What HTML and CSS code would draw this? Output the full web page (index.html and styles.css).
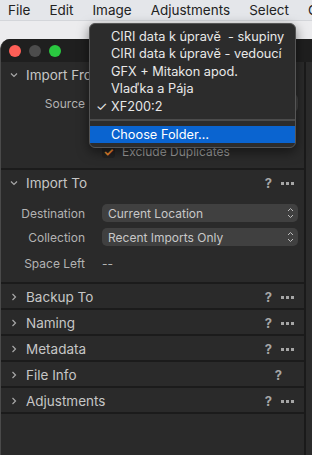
FILE: index.html
```html
<!DOCTYPE html>
<html lang="cs">
<head>
    <meta charset="UTF-8">
    <meta name="viewport" content="width=device-width, initial-scale=1.0">
    <title>Import</title>
    <link rel="stylesheet" href="styles.css">
</head>
<body>
    <!-- systémová lišta -->
    <div class="menubar">
        <span>File</span>
        <span>Edit</span>
        <span>Image</span>
        <span>Adjustments</span>
        <span>Select</span>
        <span>C</span>
    </div>

    <div class="window">
        <div class="titlebar">
            <span class="light red"></span>
            <span class="light grey"></span>
            <span class="light green"></span>
        </div>

        <div class="window-body">
            <div class="inspector">
                <!-- Import From -->
                <div class="section">
                    <div class="section-head">
                        <svg class="chevron" width="8" height="8" viewBox="0 0 8 8"><path d="M1 2.5 L4 5.5 L7 2.5" /></svg>
                        <span class="section-title">Import From</span>
                    </div>
                    <div class="section-body from-body">
                        <div class="row">
                            <span class="label">Source</span>
                            <div class="popup"></div>
                        </div>
                        <div class="row">
                            <span class="label"></span>
                            <div class="check"><span class="box"></span></div>
                        </div>
                        <div class="row">
                            <span class="label"></span>
                            <div class="check"><span class="box">✓</span>Exclude Duplicates</div>
                        </div>
                    </div>
                </div>

                <!-- Import To -->
                <div class="section">
                    <div class="section-head">
                        <svg class="chevron" width="8" height="8" viewBox="0 0 8 8"><path d="M1 2.5 L4 5.5 L7 2.5" /></svg>
                        <span class="section-title">Import To</span>
                        <span class="help">?</span>
                        <span class="more"><i></i><i></i><i></i></span>
                    </div>
                    <div class="section-body to-body">
                        <div class="row">
                            <span class="label">Destination</span>
                            <div class="popup">Current Location
                                <svg class="updown" width="7" height="12" viewBox="0 0 7 12"><path d="M1 4 L3.5 1.5 L6 4 M1 8 L3.5 10.5 L6 8" /></svg>
                            </div>
                        </div>
                        <div class="row">
                            <span class="label">Collection</span>
                            <div class="popup">Recent Imports Only
                                <svg class="updown" width="7" height="12" viewBox="0 0 7 12"><path d="M1 4 L3.5 1.5 L6 4 M1 8 L3.5 10.5 L6 8" /></svg>
                            </div>
                        </div>
                        <div class="row">
                            <span class="label">Space Left</span>
                            <span class="value">--</span>
                        </div>
                    </div>
                </div>

                <div class="section">
                    <div class="section-head">
                        <svg class="chevron" width="8" height="8" viewBox="0 0 8 8"><path d="M2.5 1 L5.5 4 L2.5 7" /></svg>
                        <span class="section-title">Backup To</span>
                        <span class="help">?</span>
                        <span class="more"><i></i><i></i><i></i></span>
                    </div>
                </div>

                <div class="section">
                    <div class="section-head">
                        <svg class="chevron" width="8" height="8" viewBox="0 0 8 8"><path d="M2.5 1 L5.5 4 L2.5 7" /></svg>
                        <span class="section-title">Naming</span>
                        <span class="help">?</span>
                        <span class="more"><i></i><i></i><i></i></span>
                    </div>
                </div>

                <div class="section">
                    <div class="section-head">
                        <svg class="chevron" width="8" height="8" viewBox="0 0 8 8"><path d="M2.5 1 L5.5 4 L2.5 7" /></svg>
                        <span class="section-title">Metadata</span>
                        <span class="help">?</span>
                        <span class="more"><i></i><i></i><i></i></span>
                    </div>
                </div>

                <div class="section">
                    <div class="section-head">
                        <svg class="chevron" width="8" height="8" viewBox="0 0 8 8"><path d="M2.5 1 L5.5 4 L2.5 7" /></svg>
                        <span class="section-title">File Info</span>
                        <span class="help solo">?</span>
                    </div>
                </div>

                <div class="section">
                    <div class="section-head">
                        <svg class="chevron" width="8" height="8" viewBox="0 0 8 8"><path d="M2.5 1 L5.5 4 L2.5 7" /></svg>
                        <span class="section-title">Adjustments</span>
                        <span class="help">?</span>
                        <span class="more"><i></i><i></i><i></i></span>
                    </div>
                </div>
            </div>
            <div class="divider"></div>
            <div class="viewer"></div>
        </div>
    </div>

    <!-- rozbalené menu zdroje -->
    <div class="source-menu">
        <div class="menu-item">CIRI data k úpravě&nbsp; - skupiny</div>
        <div class="menu-item">CIRI data k úpravě - vedoucí</div>
        <div class="menu-item">GFX + Mitakon apod.</div>
        <div class="menu-item">Vlaďka a Pája</div>
        <div class="menu-item checked"><span class="tick">✓</span>XF200:2</div>
        <div class="menu-sep"></div>
        <div class="menu-item selected">Choose Folder…</div>
    </div>
</body>
</html>
```

FILE: styles.css
```css
body {
    margin: 0;
    padding: 0;
    width: 312px;
    height: 455px;
    overflow: hidden;
    background: #ececee;
    font-family: 'Inter', 'Noto Sans', sans-serif;
    position: relative;
}

.menubar {
    height: 21px;
    display: flex;
    align-items: center;
    gap: 19px;
    padding-left: 8px;
    background: #e4e6ea;
    border-bottom: 1px solid #d4d6da;
    color: #222;
    font-size: 13.5px;
    white-space: nowrap;
    box-sizing: border-box;
}

.window {
    margin-top: 18px;
    height: 416px;
    background: #2a2a2a;
    border-top-left-radius: 10px;
    border-left: 1px solid #4a4a4a;
    overflow: hidden;
    display: flex;
    flex-direction: column;
}

.titlebar {
    height: 23px;
    flex: none;
    background: #1f1f1f;
    display: flex;
    align-items: center;
    gap: 8px;
    padding-left: 8px;
}

.light {
    width: 12px;
    height: 12px;
    border-radius: 50%;
}

.light.red { background: #fe5f57; }
.light.grey { background: #4c4c4c; }
.light.green { background: #2ac840; }

.window-body {
    flex: 1;
    display: flex;
}

.inspector {
    width: 303px;
    flex: none;
}

.divider {
    width: 2px;
    background: #1a1a1a;
}

.viewer {
    flex: 1;
    background: #2b2b2b;
}

.section {
    border-bottom: 2px solid #1b1b1b;
}

.section-head {
    height: 24px;
    box-sizing: border-box;
    padding: 2px 10px 0 9px;
    display: flex;
    align-items: center;
    color: #c6c6c6;
    font-size: 13.5px;
}

.chevron {
    fill: none;
    stroke: #a8a8a8;
    stroke-width: 1.2;
    margin-right: 8px;
}

.section-title {
    flex: 1;
}

.help {
    font-weight: bold;
    font-size: 13px;
    color: #a6a6a6;
    margin-right: 9px;
}

.help.solo {
    margin-right: 12px;
}

.more {
    display: flex;
    gap: 2px;
    padding-top: 1px;
}

.more i {
    width: 3px;
    height: 3px;
    background: #a6a6a6;
}

.section-body {
    display: flex;
    flex-direction: column;
    gap: 6px;
}

.from-body {
    padding: 8px 0 8px;
}

.to-body {
    padding: 10px 0 10px;
}

.to-body .row:last-child {
    margin-top: 2px;
}

.row {
    display: flex;
    align-items: center;
    height: 18px;
}

.label {
    width: 84px;
    text-align: right;
    color: #b3b3b3;
    font-size: 12px;
    margin-right: 17px;
}

.popup {
    width: 196px;
    height: 18px;
    box-sizing: border-box;
    background: #404040;
    border-radius: 5px;
    color: #c8c8c8;
    font-size: 12px;
    display: flex;
    align-items: center;
    padding-left: 6px;
    position: relative;
}

.updown {
    position: absolute;
    right: 4px;
    top: 3px;
    fill: none;
    stroke: #bdbdbd;
    stroke-width: 1;
}

.value {
    color: #b3b3b3;
    font-size: 12px;
}

.check {
    display: flex;
    align-items: center;
    color: #9c9c9c;
    font-size: 12px;
}

.box {
    width: 13px;
    height: 13px;
    border-radius: 3px;
    background: #222;
    color: #f08a30;
    font-size: 12px;
    font-weight: bold;
    line-height: 13px;
    text-align: center;
    margin-right: 7px;
}

/* rozbalené menu */
.source-menu {
    position: absolute;
    left: 89px;
    top: 23px;
    width: 207px;
    box-sizing: border-box;
    padding: 4px 0 4px;
    background: #2c2c2c;
    border: 1px solid #555;
    border-radius: 6px;
    box-shadow: 0 4px 12px rgba(0, 0, 0, 0.5);
    color: #e8e8e8;
    font-size: 12.75px;
}

.menu-item {
    height: 17.4px;
    line-height: 17px;
    padding-left: 21px;
    white-space: nowrap;
    position: relative;
}

.menu-item .tick {
    position: absolute;
    left: 6px;
}

.menu-sep {
    height: 2px;
    background: #4b4b4b;
    margin: 4px 0 5px;
}

.menu-item.selected {
    background: #0a64d0;
    color: #fff;
}
```
